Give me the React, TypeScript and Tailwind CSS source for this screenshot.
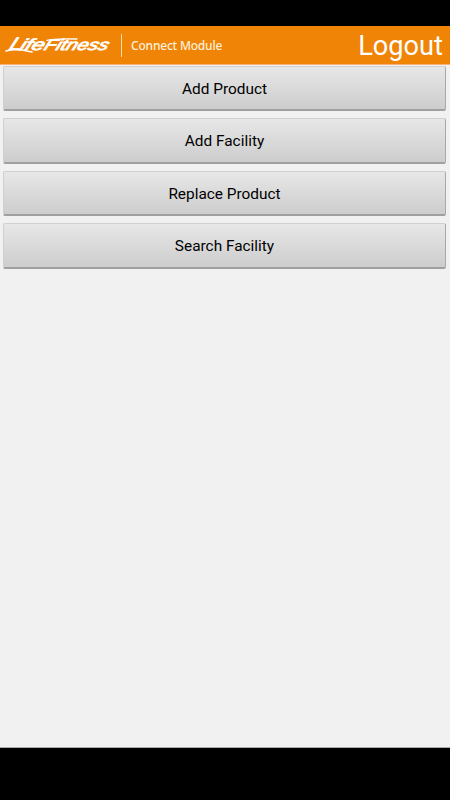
const menuItems = ['Add Product', 'Add Facility', 'Replace Product', 'Search Facility'];

function BrandLogo() {
  return (
    <svg width="108" height="20" viewBox="0 0 108 20" className="shrink-0" role="img" aria-label="Life Fitness">
      <g
        fill="#fff"
        fontFamily="'Liberation Sans', Arial, sans-serif"
        fontStyle="italic"
        transform="translate(0 15.2) skewX(-22)"
      >
        <text x="4" y="0" fontSize="18" stroke="#fff" strokeWidth="0.7" textLength="13" lengthAdjust="spacingAndGlyphs">
          L
        </text>
        <text x="15" y="0" fontSize="16" stroke="#fff" strokeWidth="0.8" textLength="24" lengthAdjust="spacingAndGlyphs">
          ife
        </text>
        <text x="39" y="0" fontSize="15.5" stroke="#fff" strokeWidth="0.8" textLength="64" lengthAdjust="spacingAndGlyphs">
          Fitness
        </text>
      </g>
      {/* swashes under the L and over the F */}
      <path d="M2 16L8 14.6C14 14.2 20 15.2 28 17" fill="none" stroke="#fff" strokeWidth="1.6" strokeLinecap="round" />
      <path d="M43 5.4C47 4 58 3.6 73 4" fill="none" stroke="#fff" strokeWidth="1.4" strokeLinecap="round" />
    </svg>
  );
}

function Header() {
  return (
    <header className="flex h-[39px] shrink-0 items-center border-b border-[#f7b377] bg-[#f08406] pl-[4px] pr-[7px] text-white">
      <BrandLogo />
      <div className="ml-[9px] h-[23px] w-px bg-[#fbd9ad]" />
      <span className="ml-[9px] pt-px font-['Noto_Sans',sans-serif] text-[12px] font-medium leading-[17px] tracking-[-0.2px] text-[#fff0dc]">
        Connect Module
      </span>
      <button type="button" className="ml-auto pt-[2px] font-[Roboto,sans-serif] text-[27.2px] leading-[36px]">
        Logout
      </button>
    </header>
  );
}

export default function App() {
  return (
    <div className="flex h-[800px] w-[450px] flex-col overflow-hidden bg-black pb-[52px] pt-[26px]">
      <Header />
      <main className="flex flex-1 flex-col gap-[7px] border-b border-[#aaa] bg-[#f1f1f1] pl-[3px] pr-[4px] pt-[0.5px]">
        {menuItems.map((item) => (
          <button
            key={item}
            type="button"
            className="h-[45.5px] shrink-0 rounded-[2px] border border-b-2 border-[#d0d0d0] border-b-[#a0a0a0] border-r-[#a8a8a8] bg-linear-to-b from-[#e7e7e7] to-[#cdcdcd] pt-[2px] font-[Roboto,sans-serif] text-[15.4px] leading-[20px] text-black"
          >
            {item}
          </button>
        ))}
      </main>
    </div>
  );
}
